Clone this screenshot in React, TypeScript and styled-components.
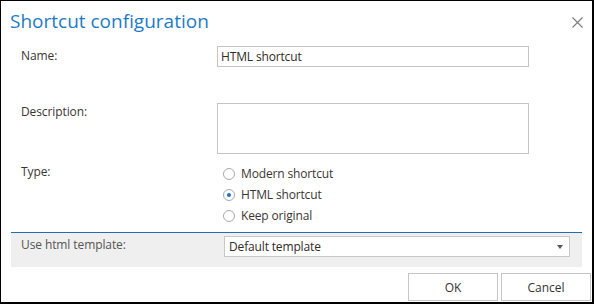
import styled, { createGlobalStyle } from 'styled-components';

const GlobalStyle = createGlobalStyle`
  html, body {
    margin: 0;
    padding: 0;
    background: #fff;
  }
  body {
    font-family: "Open Sans", "Noto Sans", "Liberation Sans", sans-serif;
    color: #333;
  }
`;

const Frame = styled.div`
  box-sizing: border-box;
  width: 594px;
  height: 304px;
  border-style: solid;
  border-color: #000;
  border-width: 1px 2px 2px 1px;
  display: flex;
  flex-direction: column;
  background: #fff;
`;

const Header = styled.div`
  display: flex;
  align-items: flex-start;
  justify-content: space-between;
  padding: 6px 8px 0 9px;
  height: 39px;
  box-sizing: border-box;
`;

const Title = styled.h1`
  margin: 0;
  font-size: 19px;
  font-weight: 400;
  line-height: 28px;
  color: #1e7bc4;
`;

const CloseButton = styled.button`
  border: 0;
  background: none;
  padding: 0;
  margin-top: 10px;
  width: 12px;
  height: 12px;
  display: flex;
  cursor: pointer;
`;

const Form = styled.div`
  padding: 6px 0 0 20px;
  display: flex;
  flex-direction: column;
`;

const Row = styled.div<{ $gap?: number }>`
  display: grid;
  grid-template-columns: 196px 312px;
  margin-top: ${(p) => p.$gap ?? 0}px;
`;

const Label = styled.div<{ $pad?: number }>`
  font-size: 12px;
  line-height: 16px;
  padding-top: ${(p) => p.$pad ?? 0}px;
  color: #3a3533;
  letter-spacing: -0.1px;
`;

const TextInput = styled.div`
  box-sizing: border-box;
  height: 21px;
  border: 1px solid #c4c4c4;
  padding: 0 3px;
  font-size: 12px;
  line-height: 19px;
  letter-spacing: -0.15px;
  color: #2f2a28;
`;

const TextArea = styled.div`
  box-sizing: border-box;
  height: 51px;
  border: 1px solid #c4c4c4;
`;

const RadioList = styled.div`
  display: flex;
  flex-direction: column;
  padding-left: 6px;
`;

const RadioItem = styled.label`
  display: flex;
  align-items: center;
  gap: 6px;
  height: 21px;
  font-size: 12px;
  letter-spacing: -0.15px;
  color: #3a3533;
`;

const RadioCircle = styled.span<{ $checked?: boolean }>`
  box-sizing: border-box;
  width: 12px;
  height: 12px;
  border-radius: 50%;
  border: 1px solid #a9a9a9;
  background: #fff;
  display: flex;
  align-items: center;
  justify-content: center;
  &::after {
    content: '';
    width: 4px;
    height: 4px;
    border-radius: 50%;
    background: ${(p) => (p.$checked ? '#1a73c9' : 'transparent')};
  }
`;

const TemplateSection = styled.div`
  margin: 6px 10px 0 10px;
  border-top: 1px solid #1e6db5;
  background: #efefef;
  height: 35px;
  box-sizing: border-box;
  display: grid;
  grid-template-columns: 203px 346px;
  padding: 3px 0 0 10px;
`;

const SectionLabel = styled.div`
  font-size: 12px;
  line-height: 16px;
  padding-top: 1px;
  color: #555;
  letter-spacing: -0.1px;
`;

const Select = styled.div`
  box-sizing: border-box;
  height: 21px;
  border: 1px solid #c8c8c8;
  background: #fff;
  display: flex;
  align-items: center;
  justify-content: space-between;
  padding: 0 6px 0 4px;
  font-size: 12px;
  letter-spacing: -0.15px;
  color: #2f2a28;
`;

const Caret = styled.span`
  width: 0;
  height: 0;
  border-left: 3px solid transparent;
  border-right: 3px solid transparent;
  border-top: 4px solid #555;
`;

const Footer = styled.div`
  margin-top: auto;
  display: flex;
  justify-content: flex-end;
  gap: 3px;
  padding: 0 1px 1px 0;
`;

const Button = styled.button`
  box-sizing: border-box;
  width: 90px;
  height: 28px;
  border: 1px solid #c6c6c6;
  background: #fff;
  font-family: inherit;
  font-size: 12px;
  color: #333;
  cursor: pointer;
`;

export default function App() {
  return (
    <>
      <GlobalStyle />
      <Frame>
        <Header>
          <Title>Shortcut configuration</Title>
          <CloseButton aria-label="Close">
            <svg width="11" height="11" viewBox="0 0 11 11">
              <path d="M0.5 0.5 L10.5 10.5 M10.5 0.5 L0.5 10.5" stroke="#7a7a7a" strokeWidth="1.1" fill="none" />
            </svg>
          </CloseButton>
        </Header>
        <Form>
          <Row>
            <Label $pad={2}>Name:</Label>
            <TextInput>HTML shortcut</TextInput>
          </Row>
          <Row $gap={36}>
            <Label $pad={1}>Description:</Label>
            <TextArea />
          </Row>
          <Row $gap={9}>
            <Label $pad={1}>Type:</Label>
            <RadioList>
              <RadioItem>
                <RadioCircle />
                Modern shortcut
              </RadioItem>
              <RadioItem>
                <RadioCircle $checked />
                HTML shortcut
              </RadioItem>
              <RadioItem>
                <RadioCircle />
                Keep original
              </RadioItem>
            </RadioList>
          </Row>
        </Form>
        <TemplateSection>
          <SectionLabel>Use html template:</SectionLabel>
          <Select>
            Default template
            <Caret />
          </Select>
        </TemplateSection>
        <Footer>
          <Button>OK</Button>
          <Button>Cancel</Button>
        </Footer>
      </Frame>
    </>
  );
}
